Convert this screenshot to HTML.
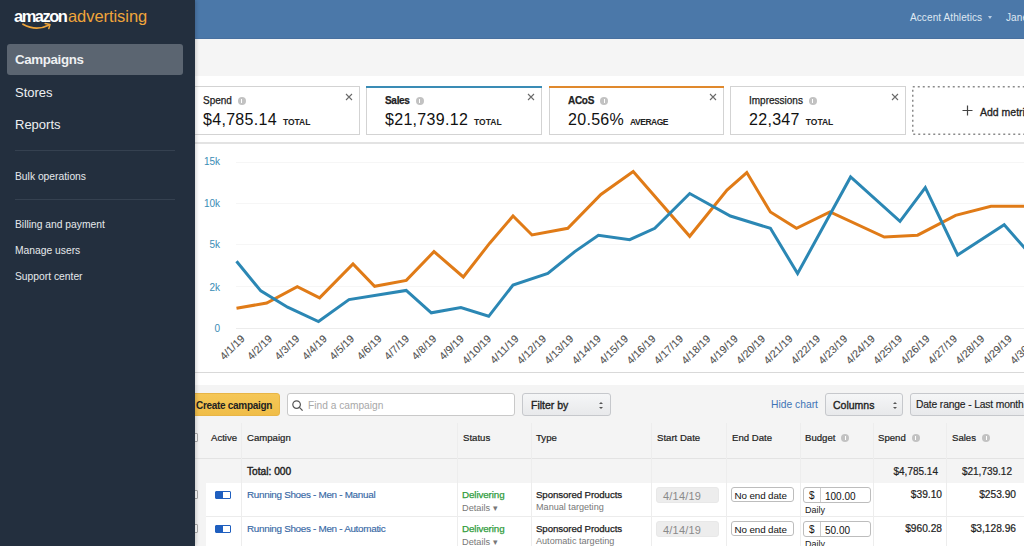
<!DOCTYPE html>
<html><head><meta charset="utf-8">
<style>
*{margin:0;padding:0;box-sizing:border-box}
html,body{width:1024px;height:546px;overflow:hidden;background:#fff;font-family:"Liberation Sans",sans-serif;color:#111}
.a{position:absolute;white-space:nowrap}
#hdr{position:absolute;left:0;top:0;width:1024px;height:39px;background:#4b78a9;border-bottom:1px solid #48709f}
#band{position:absolute;left:0;top:39px;width:1024px;height:37px;background:#f5f5f5}
#lower{position:absolute;left:0;top:385px;width:1024px;height:161px;background:#f4f4f4}
#side{position:absolute;left:0;top:0;width:195px;height:546px;background:#232f3e;box-shadow:1px 0 4px rgba(0,0,0,.2)}
.nav{position:absolute;left:15px;color:#eef0f2;font-size:13px}
.nav2{position:absolute;left:15px;color:#e6e9ec;font-size:10.3px}
.sep{position:absolute;left:15px;width:160px;height:1px;background:#354150}
.card{position:absolute;top:86px;height:49px;width:176px;border:1px solid #d3d3d3;background:#fff}
.card .lb{position:absolute;left:18px;top:8px;font-size:10px;color:#222;-webkit-text-stroke:0.25px #222}
.card .val{position:absolute;left:18px;top:24px;font-size:16px;letter-spacing:0.3px;color:#111}
.card .tb{position:absolute;left:-1px;right:-1px;top:-1px;height:2px}
.card .tt{font-size:8.5px;font-weight:bold;margin-left:6px;letter-spacing:0;color:#222}
.card .x{position:absolute;right:6px;top:6px}
.info{display:inline-block;position:relative;width:8px;height:8px;border-radius:50%;background:#c2c2c2;margin-left:6px;vertical-align:-1px;-webkit-text-stroke:0}
.info:after{content:"";position:absolute;left:3.5px;top:2px;width:1px;height:4px;background:#fff}
.btn{top:393px;height:23px;border-radius:3px;background:linear-gradient(#f5f6f7,#e8e9eb);border:1px solid #c6c8cc}
.ud{top:401px;width:6px;height:9px}
.ud:before{content:"";position:absolute;left:1px;top:1px;border-left:2px solid transparent;border-right:2px solid transparent;border-bottom:2.5px solid #555}
.ud:after{content:"";position:absolute;left:1px;top:5.5px;border-left:2px solid transparent;border-right:2px solid transparent;border-top:2.5px solid #555}
.vl{top:423px;width:1px;height:126px;background:#ededed}
.th{top:432px;font-size:9.6px;color:#222;-webkit-text-stroke:0.2px #222}
.cb{left:186px;width:12px;height:9px;border:1px solid #aaa;border-radius:1px;background:#fff}
.tog{left:215px;width:16px;height:8px;border:1px solid #1f5fbf;border-radius:1px;background:linear-gradient(90deg,#1f5fbf 50%,#fff 50%)}
.lnk{left:247px;font-size:9.9px;letter-spacing:-0.3px;color:#3768a5;-webkit-text-stroke:0.15px #3768a5}
.dlv{left:462px;font-size:9.8px;letter-spacing:-0.1px;color:#2f9c3c;-webkit-text-stroke:0.25px #2f9c3c}
.det{left:462px;font-size:9.2px;color:#777}
.sp{left:536px;font-size:9.7px;letter-spacing:-0.1px;color:#222;-webkit-text-stroke:0.25px #222}
.sub{left:536px;font-size:9.1px;color:#777}
.sd{left:656px;width:63px;height:16px;border-radius:3px;background:#ededed;border:1px solid #e8e8e8;font-size:11px;letter-spacing:0.2px;color:#8a8a8a;padding:1.5px 0 0 6px}
.ed{left:731px;width:63px;height:15px;border-radius:3px;background:#fff;border:1px solid #bdbdbd;font-size:9.8px;letter-spacing:-0.1px;color:#111;padding:1.5px 0 0 2.5px}
.bd{left:803px;width:68px;height:16px;border-radius:3px;background:#fff;border:1px solid #bdbdbd;font-size:10px;color:#111}
.bd .dl{position:absolute;left:0;top:0;width:17px;height:14px;border-right:1px solid #ccc;padding:1.5px 0 0 5px}
.bd .amt{position:absolute;left:21px;top:2.5px}
.daily{left:805px;font-size:9px;color:#222;margin-top:0.5px}
.num{font-size:10.2px;color:#222;-webkit-text-stroke:0.2px #222}
</style></head>
<body>
<div id="hdr">
  <div class="a" style="left:910px;top:11.5px;font-size:10px;letter-spacing:0.1px;color:#dfe8f2">Accent Athletics</div>
  <div class="a" style="left:987.5px;top:16px;width:0;height:0;border-left:2.5px solid transparent;border-right:2.5px solid transparent;border-top:3px solid #b9cde3"></div>
  <div class="a" style="left:1006px;top:11.5px;font-size:10px;letter-spacing:0.1px;color:#dfe8f2">Jane</div>
</div>
<div id="band"></div>
<div id="lower"></div>

<!-- cards -->
<div class="card" style="left:184px;width:176px"><div class="lb">Spend<span class="info"></span></div><div class="val">$4,785.14<span class="tt">TOTAL</span></div><svg class="x" width="8" height="8" viewBox="0 0 8 8"><path d="M1 1L7 7M7 1L1 7" stroke="#6a6a6a" stroke-width="1.1"/></svg></div>
<div class="card" style="left:366px"><div class="tb" style="background:#3a8cb5"></div><div class="lb" style="font-weight:bold;letter-spacing:-0.3px">Sales<span class="info"></span></div><div class="val">$21,739.12<span class="tt">TOTAL</span></div><svg class="x" width="8" height="8" viewBox="0 0 8 8"><path d="M1 1L7 7M7 1L1 7" stroke="#6a6a6a" stroke-width="1.1"/></svg></div>
<div class="card" style="left:549px;width:175px"><div class="tb" style="background:#e0892d"></div><div class="lb" style="font-weight:bold;letter-spacing:-0.3px">ACoS<span class="info"></span></div><div class="val">20.56%<span class="tt" style="letter-spacing:-0.5px">AVERAGE</span></div><svg class="x" width="8" height="8" viewBox="0 0 8 8"><path d="M1 1L7 7M7 1L1 7" stroke="#6a6a6a" stroke-width="1.1"/></svg></div>
<div class="card" style="left:730px"><div class="lb">Impressions<span class="info"></span></div><div class="val">22,347<span class="tt">TOTAL</span></div><svg class="x" width="8" height="8" viewBox="0 0 8 8"><path d="M1 1L7 7M7 1L1 7" stroke="#6a6a6a" stroke-width="1.1"/></svg></div>
<svg class="a" style="left:911px;top:85px" width="120" height="50" viewBox="0 0 120 50"><rect x="1.75" y="1.75" width="130" height="47.5" fill="#fff" stroke="#8a8a8a" stroke-width="1.5" stroke-dasharray="2 3"/><path d="M56.5 20.5 V30.5 M51.5 25.5 H61.5" stroke="#444" stroke-width="1.2"/></svg>
<div class="a" style="left:980px;top:106px;font-size:10.5px;color:#222;-webkit-text-stroke:0.3px #222">Add metric</div>

<div class="a" style="left:0;top:142px;width:1024px;height:2px;background:#e3e3e3"></div>
<div class="a" style="left:0;top:372px;width:1024px;height:1px;background:#d9d9d9"></div>

<svg class="a" style="left:0;top:0" width="1024" height="546" viewBox="0 0 1024 546">
<g stroke="#f6f6f6" stroke-width="1">
<line x1="236" y1="162.5" x2="1024" y2="162.5"/><line x1="236" y1="203.5" x2="1024" y2="203.5"/><line x1="236" y1="244.5" x2="1024" y2="244.5"/><line x1="236" y1="286.5" x2="1024" y2="286.5"/><line x1="236" y1="328.5" x2="1024" y2="328.5" stroke="#ececec"/>
</g>
<g font-family="Liberation Sans" font-size="10" fill="#3a8cb5" text-anchor="end">
<text x="220" y="165">15k</text><text x="220" y="207">10k</text><text x="220" y="248">5k</text><text x="220" y="290.5">2k</text><text x="220" y="331.5">0</text>
</g>
<g font-family="Liberation Sans" font-size="10.5" fill="#505050" stroke="#505050" stroke-width="0.12" letter-spacing="0.15">
<text x="245.5" y="339.2" transform="rotate(-45 245.5 339.2)" text-anchor="end">4/1/19</text>
<text x="272.9" y="339.2" transform="rotate(-45 272.9 339.2)" text-anchor="end">4/2/19</text>
<text x="300.3" y="339.2" transform="rotate(-45 300.3 339.2)" text-anchor="end">4/3/19</text>
<text x="327.7" y="339.2" transform="rotate(-45 327.7 339.2)" text-anchor="end">4/4/19</text>
<text x="355.1" y="339.2" transform="rotate(-45 355.1 339.2)" text-anchor="end">4/5/19</text>
<text x="382.5" y="339.2" transform="rotate(-45 382.5 339.2)" text-anchor="end">4/6/19</text>
<text x="409.9" y="339.2" transform="rotate(-45 409.9 339.2)" text-anchor="end">4/7/19</text>
<text x="437.3" y="339.2" transform="rotate(-45 437.3 339.2)" text-anchor="end">4/8/19</text>
<text x="464.7" y="339.2" transform="rotate(-45 464.7 339.2)" text-anchor="end">4/9/19</text>
<text x="492.1" y="339.2" transform="rotate(-45 492.1 339.2)" text-anchor="end">4/10/19</text>
<text x="519.5" y="339.2" transform="rotate(-45 519.5 339.2)" text-anchor="end">4/11/19</text>
<text x="546.9" y="339.2" transform="rotate(-45 546.9 339.2)" text-anchor="end">4/12/19</text>
<text x="574.3" y="339.2" transform="rotate(-45 574.3 339.2)" text-anchor="end">4/13/19</text>
<text x="601.7" y="339.2" transform="rotate(-45 601.7 339.2)" text-anchor="end">4/14/19</text>
<text x="629.1" y="339.2" transform="rotate(-45 629.1 339.2)" text-anchor="end">4/15/19</text>
<text x="656.5" y="339.2" transform="rotate(-45 656.5 339.2)" text-anchor="end">4/16/19</text>
<text x="683.9" y="339.2" transform="rotate(-45 683.9 339.2)" text-anchor="end">4/17/19</text>
<text x="711.3" y="339.2" transform="rotate(-45 711.3 339.2)" text-anchor="end">4/18/19</text>
<text x="738.7" y="339.2" transform="rotate(-45 738.7 339.2)" text-anchor="end">4/19/19</text>
<text x="766.1" y="339.2" transform="rotate(-45 766.1 339.2)" text-anchor="end">4/20/19</text>
<text x="793.5" y="339.2" transform="rotate(-45 793.5 339.2)" text-anchor="end">4/21/19</text>
<text x="820.9" y="339.2" transform="rotate(-45 820.9 339.2)" text-anchor="end">4/22/19</text>
<text x="848.3" y="339.2" transform="rotate(-45 848.3 339.2)" text-anchor="end">4/23/19</text>
<text x="875.7" y="339.2" transform="rotate(-45 875.7 339.2)" text-anchor="end">4/24/19</text>
<text x="903.1" y="339.2" transform="rotate(-45 903.1 339.2)" text-anchor="end">4/25/19</text>
<text x="930.5" y="339.2" transform="rotate(-45 930.5 339.2)" text-anchor="end">4/26/19</text>
<text x="957.9" y="339.2" transform="rotate(-45 957.9 339.2)" text-anchor="end">4/27/19</text>
<text x="985.3" y="339.2" transform="rotate(-45 985.3 339.2)" text-anchor="end">4/28/19</text>
<text x="1012.7" y="339.2" transform="rotate(-45 1012.7 339.2)" text-anchor="end">4/29/19</text>
<text x="1040.1" y="339.2" transform="rotate(-45 1040.1 339.2)" text-anchor="end">4/30/19</text>
</g>
<polyline fill="none" stroke="#e07b17" stroke-width="3" stroke-linejoin="miter" points="236.5,308.3 266.7,303.0 297.3,286.7 319.6,297.8 353.0,264.0 374.6,286.3 406.3,280.4 434.0,251.6 463.3,277.0 489.7,243.2 513.0,216.0 532.0,235.0 567.8,228.3 600.9,194.5 633.2,171.5 689.7,236.3 727.0,190.0 746.8,172.6 770.4,212.0 796.5,228.3 830.0,212.0 884.3,237.0 917.6,235.2 955.6,215.4 991.0,206.3 1024.0,206.3"/>
<polyline fill="none" stroke="#2b87b4" stroke-width="3" stroke-linejoin="miter" points="236.5,261.3 260.8,290.9 287.6,307.2 318.5,321.5 349.0,299.6 406.2,290.4 431.3,312.8 460.9,307.6 488.7,316.3 513.0,285.0 547.8,273.5 574.8,251.6 598.4,235.2 629.7,239.7 654.8,228.3 689.7,193.5 730.4,216.0 770.4,228.3 797.6,273.5 850.6,177.0 900.0,221.3 925.3,187.6 957.6,255.0 1004.2,224.8 1030.0,254.0"/>
</svg>


<!-- toolbar -->
<div class="a" style="left:184px;top:393px;width:96px;height:23px;border-radius:3px;background:linear-gradient(#f5c757,#f0bd48);border:1px solid #e8b546"></div>
<div class="a" style="left:196px;top:399.5px;font-size:10px;font-weight:bold;letter-spacing:-0.3px;color:#222">Create campaign</div>
<div class="a" style="left:287px;top:393px;width:228px;height:23px;border-radius:3px;background:#fff;border:1px solid #c9c9c9"></div>
<svg class="a" style="left:292px;top:400px" width="12" height="12" viewBox="0 0 12 12"><circle cx="4.6" cy="4.6" r="3.8" fill="none" stroke="#555" stroke-width="1.2"/><line x1="7.4" y1="7.4" x2="10.6" y2="10.6" stroke="#555" stroke-width="1.3"/></svg>
<div class="a" style="left:308px;top:400px;font-size:10.2px;color:#a8a8a8">Find a campaign</div>
<div class="btn a" style="left:522px;width:89px"></div>
<div class="a" style="left:531px;top:399px;font-size:10.5px;color:#222;-webkit-text-stroke:0.35px #222">Filter by</div>
<div class="ud a" style="left:598px"></div>
<div class="a" style="left:771px;top:399px;font-size:10.3px;color:#3f74b6">Hide chart</div>
<div class="btn a" style="left:825px;width:78px"></div>
<div class="a" style="left:833px;top:399px;font-size:10.5px;color:#222;-webkit-text-stroke:0.35px #222">Columns</div>
<div class="ud a" style="left:892px"></div>
<div class="btn a" style="left:910px;width:130px"></div>
<div class="a" style="left:916px;top:399px;font-size:10.3px;letter-spacing:-0.15px;color:#222;-webkit-text-stroke:0.15px #222">Date range - Last month</div>

<!-- table header -->
<div class="a" style="left:195px;top:458px;width:829px;height:1px;background:#e3e3e3"></div>
<div class="a" style="left:206px;top:483px;width:818px;height:33px;background:#fff"></div>
<div class="a" style="left:206px;top:516px;width:818px;height:1px;background:#ececec"></div>
<div class="a" style="left:206px;top:517px;width:818px;height:29px;background:#fff"></div>
<div class="vl a" style="left:241px"></div>
<div class="vl a" style="left:457px"></div>
<div class="vl a" style="left:531px"></div>
<div class="vl a" style="left:651px"></div>
<div class="vl a" style="left:726px"></div>
<div class="vl a" style="left:800px"></div>
<div class="vl a" style="left:873px"></div>
<div class="vl a" style="left:946px"></div>

<div class="th a" style="left:211px">Active</div>
<div class="th a" style="left:247px">Campaign</div>
<div class="th a" style="left:463px">Status</div>
<div class="th a" style="left:536px">Type</div>
<div class="th a" style="left:657px">Start Date</div>
<div class="th a" style="left:732px">End Date</div>
<div class="th a" style="left:805px">Budget<span class="info"></span></div>
<div class="th a" style="left:878px">Spend<span class="info"></span></div>
<div class="th a" style="left:952px">Sales<span class="info"></span></div>

<div class="a" style="left:247px;top:465.5px;font-size:10.2px;letter-spacing:0px;color:#222;-webkit-text-stroke:0.4px #222">Total: 000</div>
<div class="a" style="right:86px;top:466px;font-size:10px;color:#222;-webkit-text-stroke:0.2px #222">$4,785.14</div>
<div class="a" style="right:12px;top:466px;font-size:10px;color:#222;-webkit-text-stroke:0.2px #222">$21,739.12</div>

<!-- rows -->
<div class="cb a" style="top:433px"></div><div class="cb a" style="top:490px"></div><div class="cb a" style="top:524px"></div>
<div class="tog a" style="top:491px"></div>
<div class="lnk a" style="top:489px">Running Shoes - Men - Manual</div>
<div class="dlv a" style="top:489px">Delivering</div>
<div class="det a" style="top:502px">Details ▾</div>
<div class="sp a" style="top:489px">Sponsored Products</div>
<div class="sub a" style="top:502px">Manual targeting</div>
<div class="sd a" style="top:487px">4/14/19</div>
<div class="ed a" style="top:487px">No end date</div>
<div class="bd a" style="top:487px"><span class="dl">$</span><span class="amt">100.00</span></div>
<div class="daily a" style="top:504px">Daily</div>
<div class="num a" style="right:82px;top:489px">$39.10</div>
<div class="num a" style="right:8px;top:489px">$253.90</div>

<div class="tog a" style="top:525px"></div>
<div class="lnk a" style="top:523px">Running Shoes - Men - Automatic</div>
<div class="dlv a" style="top:523px">Delivering</div>
<div class="det a" style="top:536px">Details ▾</div>
<div class="sp a" style="top:523px">Sponsored Products</div>
<div class="sub a" style="top:536px">Automatic targeting</div>
<div class="sd a" style="top:521px">4/14/19</div>
<div class="ed a" style="top:521px">No end date</div>
<div class="bd a" style="top:521px"><span class="dl">$</span><span class="amt">50.00</span></div>
<div class="daily a" style="top:538px">Daily</div>
<div class="num a" style="right:82px;top:523px">$960.28</div>
<div class="num a" style="right:8px;top:523px">$3,128.96</div>

<!-- sidebar -->
<div id="side">
  <div class="a" style="left:14px;top:7px;font-size:16.5px;color:#fff;font-weight:bold;letter-spacing:-1.5px">amazon<span style="color:#f0a53a;font-weight:normal;letter-spacing:-0.05px;margin-left:1.5px">advertising</span></div>
  <svg class="a" style="left:20px;top:21px" width="34" height="12" viewBox="0 0 34 12"><path d="M3 3.2 Q16 10.5 28.5 4.2" fill="none" stroke="#f0a53a" stroke-width="1.8" stroke-linecap="round"/><path d="M25.2 2.6 L30 3.6 L28.8 7.6" fill="none" stroke="#f0a53a" stroke-width="1.5" stroke-linecap="round" stroke-linejoin="round"/></svg>
  <div class="a" style="left:7px;top:44px;width:176px;height:31px;border-radius:3px;background:#5b6571"></div>
  <div class="nav" style="top:51.5px;font-weight:bold;font-size:13.3px;letter-spacing:-0.35px">Campaigns</div>
  <div class="nav" style="top:85px">Stores</div>
  <div class="nav" style="top:117px">Reports</div>
  <div class="sep" style="top:150px"></div>
  <div class="nav2" style="top:171px">Bulk operations</div>
  <div class="sep" style="top:199px"></div>
  <div class="nav2" style="top:219px">Billing and payment</div>
  <div class="nav2" style="top:245px">Manage users</div>
  <div class="nav2" style="top:271px">Support center</div>
</div>
</body></html>
